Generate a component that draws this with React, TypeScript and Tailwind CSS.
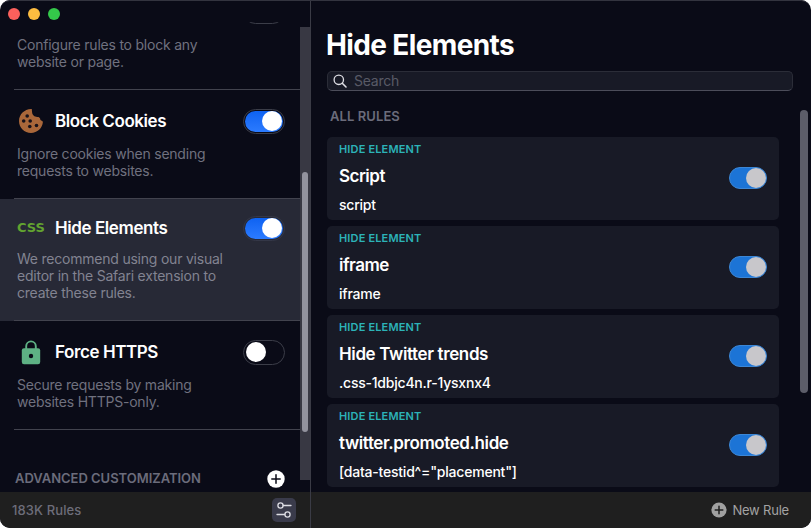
import type { ReactNode } from "react";

function SidebarToggle({ on, active = false }: { on: boolean; active?: boolean }) {
  return (
    <span
      className={`flex h-[25px] w-[42px] shrink-0 items-center rounded-full border px-[1px] ${
        active ? "border-[#343747]" : "border-[#3b3d48]"
      }`}
    >
      <span
        className={`flex h-[21px] w-full items-center rounded-full ${
          on ? "justify-end bg-linear-to-b from-[#0d62f2] to-[#2b7bff]" : "justify-start"
        }`}
      >
        <span className="mx-px size-5 rounded-full bg-white" />
      </span>
    </span>
  );
}

function CookieIcon() {
  return (
    <svg viewBox="0 0 24 24" className="size-6">
      <path
        fill="#a9673a"
        d="M12.800 0C5.800-.2 0 5.200 0 12s5.400 12 12 12c6.300 0 11.400-4.800 11.900-10.900-.2-.9-1-1.400-1.700-1.600-.7-.3-1.100-.9-1-1.700-.6-1.500-1.500-2-2.800-1.900-2.800.1-5.200-2-5.300-4.700-.1-1-.3-2.200-.3-3.200z"
      />
      <g fill="#17121a">
        <circle cx="8.200" cy="7" r="1.800" />
        <circle cx="4.700" cy="12" r="1.800" />
        <circle cx="11.200" cy="12" r="1.800" />
        <circle cx="10.800" cy="17.500" r="1.800" />
        <circle cx="17.500" cy="16.500" r="1.800" />
      </g>
    </svg>
  );
}

function LockIcon() {
  return (
    <svg viewBox="0 0 20 25" className="h-[25px] w-5">
      <path d="M5.200 9V6.200a4.800 4.800 0 0 1 9.600 0V9" fill="none" stroke="#5eb184" strokeWidth="1.900" />
      <rect x=".8" y="8.300" width="18.400" height="16" rx="2.200" fill="#5eb184" />
      <circle cx="10" cy="16" r="2.200" fill="#0a0b17" />
    </svg>
  );
}

interface SidebarItemProps {
  icon: ReactNode;
  title: string;
  lines: string[];
  on: boolean;
  active?: boolean;
}

function SidebarItem({ icon, title, lines, on, active = false }: SidebarItemProps) {
  return (
    <div className={active ? "bg-[#272936]" : ""}>
      <div className={`pr-[15px] pb-[19px] pl-[17px] ${active ? "pt-[16.500px]" : "pt-[18.500px]"}`}>
        <div className="flex h-[25px] items-center">
          <span className="flex w-[28px] justify-center">{icon}</span>
          <h2 className="ml-[10px] flex-1 pt-[1.500px] text-[17px] font-semibold tracking-[-0.42px] whitespace-nowrap text-white">
            {title}
          </h2>
          <SidebarToggle on={on} active={active} />
        </div>
        <Description lines={lines} className={active ? "mt-[9.500px] text-[#828391]" : "mt-[11.500px] text-[#70717f]"} />
      </div>
      <div className="ml-[14px] h-px bg-[#42434e]" />
    </div>
  );
}

function Description({ lines, className }: { lines: string[]; className: string }) {
  return (
    <p className={`text-[14px] leading-[17px] tracking-[-0.22px] whitespace-nowrap ${className}`}>
      {lines.map((line) => (
        <span key={line} className="block">
          {line}
        </span>
      ))}
    </p>
  );
}

function Sidebar() {
  return (
    <aside className="flex w-[310px] shrink-0 flex-col">
      <div className="flex h-[22px] shrink-0 items-center gap-2 pt-[6px] pl-2">
        <span className="size-3 rounded-full bg-[#fc605c]" />
        <span className="size-3 rounded-full bg-[#fdbc40]" />
        <span className="size-3 rounded-full bg-[#34c84a]" />
      </div>
      <div className="flex min-h-0 flex-1">
        <div className="flex w-[300px] flex-col">
          <div className="flex h-[2px] items-end justify-end overflow-hidden pr-[15px]">
            <SidebarToggle on={false} />
          </div>
          <div className="pt-[12px] pl-[17px]">
            <Description lines={["Configure rules to block any", "website or page."]} className="text-[#70717f]" />
          </div>
          <div className="mt-[19px] ml-[14px] h-px shrink-0 bg-[#42434e]" />
          <SidebarItem
            icon={<CookieIcon />}
            title="Block Cookies"
            lines={["Ignore cookies when sending", "requests to websites."]}
            on
          />
          <SidebarItem
            icon={
              <span className="font-['DejaVu_Sans',sans-serif] text-[13px] font-bold text-[#62a330]">
                CSS
              </span>
            }
            title="Hide Elements"
            lines={["We recommend using our visual", "editor in the Safari extension to", "create these rules."]}
            on
            active
          />
          <SidebarItem
            icon={<LockIcon />}
            title="Force HTTPS"
            lines={["Secure requests by making", "websites HTTPS-only."]}
            on={false}
          />
          <div className="mt-[39px] flex h-[19px] items-center justify-between pr-[15.500px] pl-[15px]">
            <h3 className="text-[13px] font-semibold tracking-[-0.025px] text-[#6b6c7b]">ADVANCED CUSTOMIZATION</h3>
            <svg viewBox="0 0 18 18" className="size-[18px]">
              <circle cx="9" cy="9" r="8.700" fill="#fff" />
              <path d="M9 4.800v8.400M4.800 9h8.400" stroke="#0a0b17" strokeWidth="1.500" strokeLinecap="round" />
            </svg>
          </div>
        </div>
        <div className="mt-[5px] h-[453px] w-[10px] bg-[#383843] pt-[145px] pl-[2px]">
          <div className="h-[260px] w-[6px] rounded-full bg-[#92929d]" />
        </div>
      </div>
      <footer className="flex h-9 shrink-0 items-center justify-between bg-[#1f1f1f] pr-[14px] pl-3">
        <span className="pt-[2px] text-[13px] font-medium tracking-[0.12px] text-[#6d6d7a]">183K Rules</span>
        <button className="flex size-6 items-center justify-center rounded-[5px] bg-[#3a3b4b]">
          <svg viewBox="0 0 24 24" className="size-6" fill="none" stroke="#dddde4" strokeWidth="1.300">
            <circle cx="8.500" cy="7.500" r="2.600" />
            <path d="M11.200 7.500H19M5 16.500h7.800" strokeLinecap="round" />
            <circle cx="15.500" cy="16.500" r="2.600" />
          </svg>
        </button>
      </footer>
    </aside>
  );
}

const rules = [
  { name: "Script", selector: "script", tracking: "tracking-[-0.5px]" },
  { name: "iframe", selector: "iframe", tracking: "tracking-[-0.5px]" },
  { name: "Hide Twitter trends", selector: ".css-1dbjc4n.r-1ysxnx4", tracking: "tracking-[-0.37px]" },
  { name: "twitter.promoted.hide", selector: '[data-testid^="placement"]', tracking: "tracking-[-0.4px]" },
];

function RuleCard({ name, selector, tracking }: { name: string; selector: string; tracking: string }) {
  return (
    <li className="flex h-[83px] items-center justify-between rounded-[5px] bg-[#181a26] pr-3 pl-3">
      <div className="flex h-full flex-col whitespace-nowrap">
        <span className="mt-1 text-[11px] leading-4 font-semibold tracking-[0.16px] text-[#2cb3b8]">HIDE ELEMENT</span>
        <span className={`mt-2 text-[17px] leading-[22px] font-semibold text-white ${tracking}`}>{name}</span>
        <span className="mt-[9px] text-[14px] leading-[18px] font-[450] tracking-[-0.22px] text-white">{selector}</span>
      </div>
      <span className="mb-[1px] flex h-[22px] w-[38px] items-center justify-end rounded-full border border-[#3c87d6] bg-[#1c74d6]">
        <span className="size-5 rounded-full bg-[#c8c7cb]" />
      </span>
    </li>
  );
}

function Main() {
  return (
    <main className="flex min-w-0 flex-1 flex-col border-l border-[#3a3b45]">
      <div className="flex h-[492px] shrink-0 flex-col overflow-hidden pl-4">
        <h1 className="mt-[29px] -ml-px text-[28px] leading-8 font-bold tracking-[-0.63px] text-white">
          Hide Elements
        </h1>
        <div className="mt-[10px] flex h-5 w-[466px] shrink-0 items-center rounded-[5px] border border-[#2b2d38] border-b-[#4c4d5a] bg-[#181a26] pl-[5px]">
          <svg viewBox="0 0 14 14" className="size-[14px]" fill="none" stroke="#dfdfe5" strokeWidth="1.300">
            <circle cx="5.800" cy="5.800" r="4.700" />
            <path d="M9.300 9.300l3.700 3.700" strokeWidth="1.600" strokeLinecap="round" />
          </svg>
          <span className="ml-[7px] text-[14px] leading-4 tracking-[-0.24px] text-[#595a66]">Search</span>
        </div>
        <div className="flex">
          <div className="w-[452px]">
            <h3 className="mt-[16px] ml-[3px] text-[13px] leading-[18px] font-semibold tracking-[0.08px] text-[#6b6c7b]">
              ALL RULES
            </h3>
            <ul className="mt-[12px] flex flex-col gap-[6px]">
              {rules.map((rule) => (
                <RuleCard key={rule.name} {...rule} />
              ))}
            </ul>
          </div>
          <div className="mt-[19px] ml-[21px] h-[283px] w-2 rounded-full bg-[#5c5d69]" />
        </div>
      </div>
      <footer className="flex h-9 items-center justify-end gap-[5px] bg-[#1f1f1f] pr-[22px]">
        <svg viewBox="0 0 16 16" className="size-4">
          <circle cx="8" cy="8" r="7.600" fill="#a0a0a0" />
          <path d="M8 4.200v7.600M4.200 8h7.600" stroke="#1f1f1f" strokeWidth="1.500" strokeLinecap="round" />
        </svg>
        <span className="pt-[2px] text-[13px] tracking-[-0.2px] text-[#a3a3a3]">New Rule</span>
      </footer>
    </main>
  );
}

export default function App() {
  return (
    <div className="h-[528px] w-[811px] bg-white">
      <div className="relative flex size-full overflow-hidden rounded-[10px] bg-[#0a0b17] font-['Inter',sans-serif]">
        <Sidebar />
        <Main />
        <div className="pointer-events-none absolute inset-0 rounded-[10px] border-t border-[#33343f]" />
      </div>
    </div>
  );
}
